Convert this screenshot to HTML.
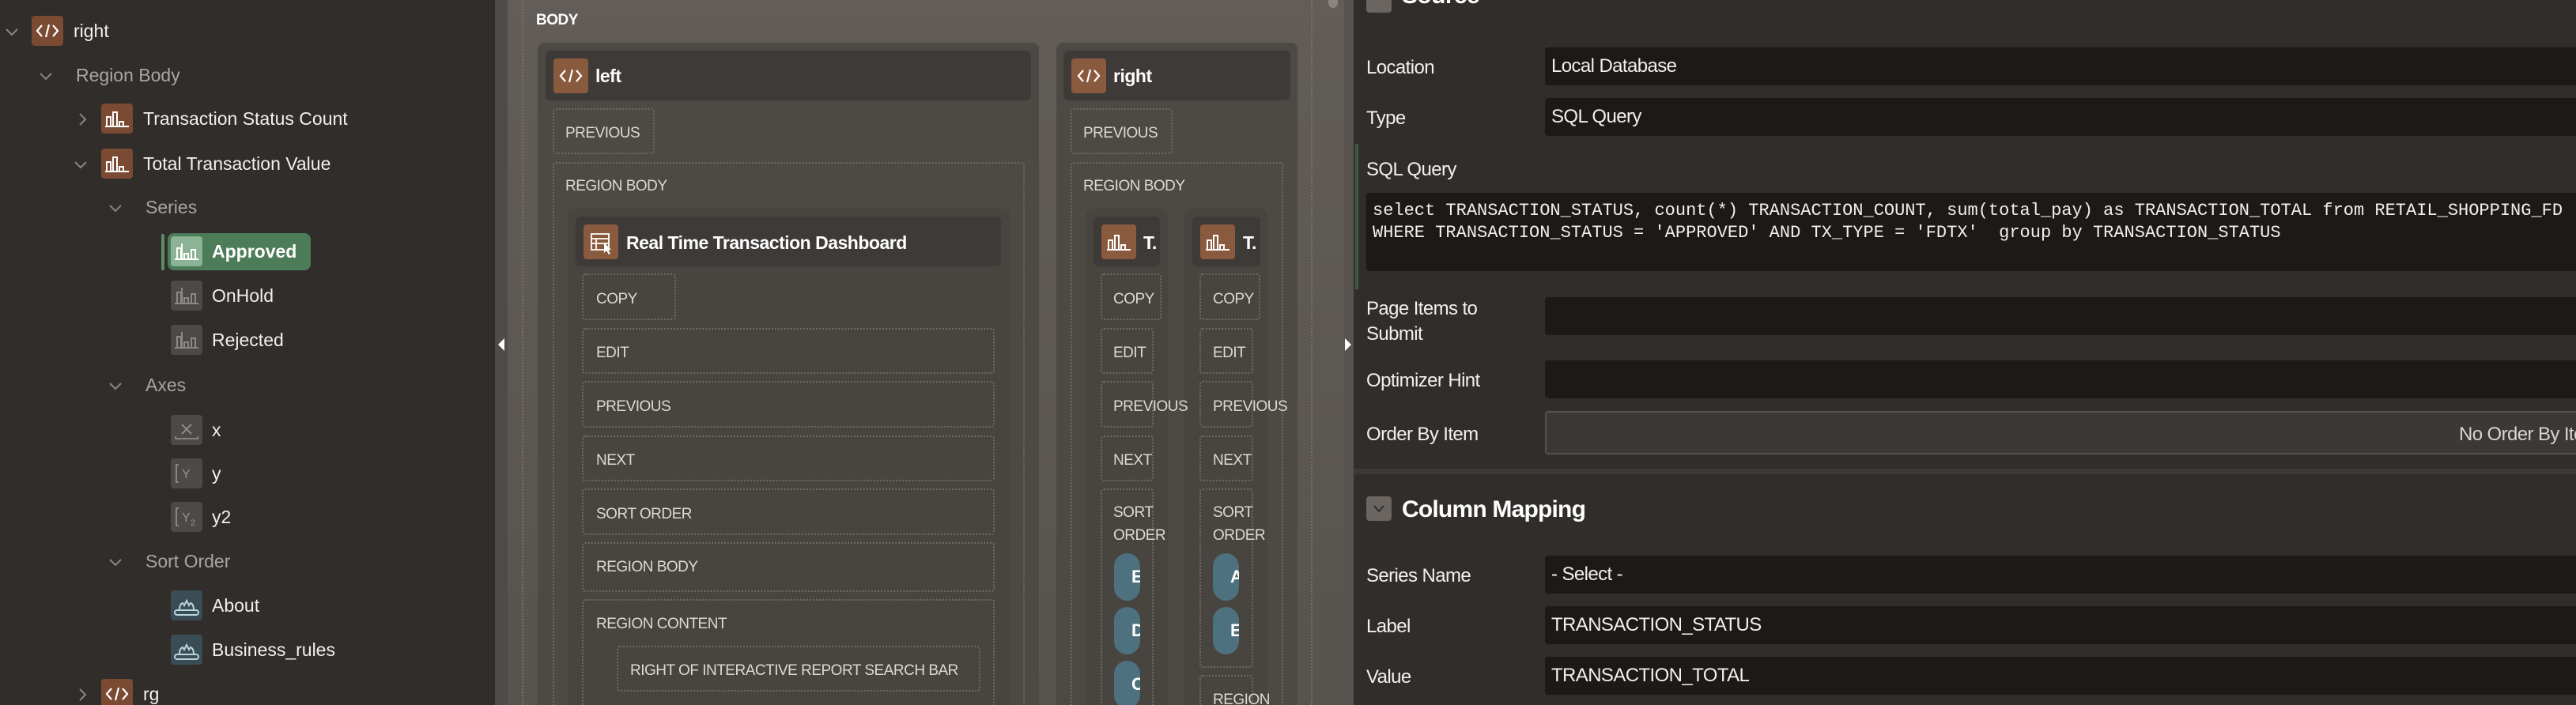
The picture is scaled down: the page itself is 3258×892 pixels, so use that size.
<!DOCTYPE html>
<html style="overflow:hidden;width:3258px;height:892px"><head><meta charset="utf-8"><style>
*{margin:0;padding:0;box-sizing:border-box}
body{width:3258px;height:892px;overflow:hidden;background:#312d2a;font-family:"Liberation Sans",sans-serif;position:relative}
.a{position:absolute}
.t{position:absolute;color:#f2efec;font-size:23px;white-space:nowrap;line-height:1}
.g{color:#a9a5a1}
.ic{position:absolute;width:40px;height:38px;border-radius:4px;display:flex;align-items:center;justify-content:center}
.br{background:#7a4a33}.gr{background:#4d4946}.tl{background:#3a4d55}
.chev{position:absolute;width:18px;height:18px}
.d{position:absolute;border:2px dotted #6e6965;border-radius:4px}
.m{position:absolute;color:#ddd9d5;font-size:19px;white-space:nowrap;line-height:1;letter-spacing:-0.5px}
.hd{position:absolute;background:#3e3a37;border-radius:6px}
.hi{position:absolute;background:#8a5a3e;border-radius:4px;display:flex;align-items:center;justify-content:center}
.ht{position:absolute;color:#fff;font-weight:bold;font-size:23px;white-space:nowrap;line-height:1;letter-spacing:-0.5px}
.pill{position:absolute;width:33px;height:60px;border-radius:17px;background:#4d717e;overflow:hidden;color:#fff;font-weight:bold;font-size:22px;line-height:60px;text-align:left;padding-left:22px}
.lb{position:absolute;left:1728px;color:#f2efec;font-size:24px;line-height:1;letter-spacing:-0.6px;white-space:nowrap}
.in{position:absolute;left:1954px;right:0;height:48px;background:#1b1a19;border-radius:4px 0 0 4px;color:#f2efec;font-size:24px;letter-spacing:-0.6px;padding-left:8px;line-height:48px;white-space:nowrap}
.clip{position:absolute;top:0;height:892px;overflow:hidden}
</style></head><body>
<svg width="0" height="0" style="position:absolute"><defs>
<symbol id="code" viewBox="0 0 40 38"><path d="M13 12 L7 19 L13 26 M27 12 L33 19 L27 26 M22 11 L18 27" stroke="#fff" stroke-width="2.2" fill="none"/></symbol>
<symbol id="bar" viewBox="0 0 40 38"><path d="M5 29 H35 M7 29 V17 H12 V29 M15 29 V11 H20 V29 M23 29 V23 H28 V29" stroke="#fff" stroke-width="2" fill="none"/></symbol>
<symbol id="bar2" viewBox="0 0 40 38"><path d="M5 29 H35 M8 29 V15 H13 V29 M17 29 V22 H22 V29 M26 29 V17 H31 V29 M14 29 V9" stroke="currentColor" stroke-width="2" fill="none"/></symbol>
<symbol id="dn" viewBox="0 0 18 18"><path d="M2 6 L9 13 L16 6" stroke="#8a8581" stroke-width="2" fill="none"/></symbol>
<symbol id="rt" viewBox="0 0 18 18"><path d="M6 2 L13 9 L6 16" stroke="#8a8581" stroke-width="2" fill="none"/></symbol>
<symbol id="hat" viewBox="0 0 40 38"><path d="M8 25 H32 A3 3 0 0 1 32 31 H8 A3 3 0 0 1 8 25 Z M11 25 C11 20 12 17 15 16 L17 19 L20 13 L23 19 L25 16 C28 17 29 20 29 25" stroke="#b8d4dc" stroke-width="2" fill="none"/></symbol>
</defs></svg>

<!-- TREE -->
<div class="clip" style="left:0;width:626px">
<svg class="chev" style="left:6px;top:31px"><use href="#dn"/></svg>
<div class="ic br" style="left:40px;top:20px"><svg width="40" height="38"><use href="#code"/></svg></div>
<div class="t" style="left:93px;top:28px">right</div>
<svg class="chev" style="left:49px;top:87px"><use href="#dn"/></svg>
<div class="t g" style="left:96px;top:84px">Region Body</div>
<svg class="chev" style="left:95px;top:142px"><use href="#rt"/></svg>
<div class="ic br" style="left:128px;top:131px"><svg width="40" height="38"><use href="#bar"/></svg></div>
<div class="t" style="left:181px;top:139px">Transaction Status Count</div>
<svg class="chev" style="left:93px;top:199px"><use href="#dn"/></svg>
<div class="ic br" style="left:128px;top:188px"><svg width="40" height="38"><use href="#bar"/></svg></div>
<div class="t" style="left:181px;top:196px">Total Transaction Value</div>
<svg class="chev" style="left:137px;top:254px"><use href="#dn"/></svg>
<div class="t g" style="left:184px;top:251px">Series</div>
<div class="a" style="left:204px;top:296px;width:4px;height:46px;background:#5e8c66;border-radius:2px"></div>
<div class="a" style="left:212px;top:295px;width:181px;height:47px;background:#4c7c58;border-radius:8px"></div>
<div class="ic" style="left:216px;top:299px;background:#8cb394;color:#fff"><svg width="40" height="38"><use href="#bar2"/></svg></div>
<div class="t" style="left:268px;top:307px;font-weight:bold;color:#fff">Approved</div>
<div class="ic gr" style="left:216px;top:355px;color:#8d8884"><svg width="40" height="38"><use href="#bar2"/></svg></div>
<div class="t" style="left:268px;top:363px">OnHold</div>
<div class="ic gr" style="left:216px;top:411px;color:#8d8884"><svg width="40" height="38"><use href="#bar2"/></svg></div>
<div class="t" style="left:268px;top:419px">Rejected</div>
<svg class="chev" style="left:137px;top:479px"><use href="#dn"/></svg>
<div class="t g" style="left:184px;top:476px">Axes</div>
<div class="ic gr" style="left:216px;top:525px"><svg width="40" height="38"><path d="M14 12 L26 24 M26 12 L14 24 M6 27 V30 H34 V27" stroke="#9a9591" stroke-width="1.6" fill="none"/></svg></div>
<div class="t" style="left:268px;top:533px">x</div>
<div class="ic gr" style="left:216px;top:580px"><svg width="40" height="38"><path d="M10 8 H7 V30 H10" stroke="#9a9591" stroke-width="1.6" fill="none"/><text x="14" y="25" fill="#9a9591" font-size="16" font-family="Liberation Sans">Y</text></svg></div>
<div class="t" style="left:268px;top:588px">y</div>
<div class="ic gr" style="left:216px;top:635px"><svg width="40" height="38"><path d="M10 8 H7 V30 H10" stroke="#9a9591" stroke-width="1.6" fill="none"/><text x="14" y="25" fill="#9a9591" font-size="16" font-family="Liberation Sans">Y</text><text x="25" y="30" fill="#9a9591" font-size="11" font-family="Liberation Sans">2</text></svg></div>
<div class="t" style="left:268px;top:643px">y2</div>
<svg class="chev" style="left:137px;top:702px"><use href="#dn"/></svg>
<div class="t g" style="left:184px;top:699px">Sort Order</div>
<div class="ic tl" style="left:216px;top:747px"><svg width="40" height="38"><use href="#hat"/></svg></div>
<div class="t" style="left:268px;top:755px">About</div>
<div class="ic tl" style="left:216px;top:803px"><svg width="40" height="38"><use href="#hat"/></svg></div>
<div class="t" style="left:268px;top:811px">Business_rules</div>
<svg class="chev" style="left:95px;top:870px"><use href="#rt"/></svg>
<div class="ic br" style="left:128px;top:859px;height:33px;border-radius:4px 4px 0 0;align-items:flex-start"><svg width="40" height="38"><use href="#code"/></svg></div>
<div class="t" style="left:181px;top:867px;height:25px;overflow:hidden">rg</div>
</div>

<!-- splitter left -->
<div class="a" style="left:626px;top:0;width:16px;height:892px;background:#4f4b48"></div>
<div class="a" style="left:630px;top:428px;width:0;height:0;border-top:8px solid transparent;border-bottom:8px solid transparent;border-right:8px solid #fff"></div>

<!-- MIDDLE -->
<div class="a" style="left:642px;top:0;width:1058px;height:892px;background:linear-gradient(#625d59,#57534f);overflow:hidden">
<div class="a" style="left:18px;top:0;width:1000px;height:892px;border-left:2px dotted #76716d;border-right:2px dotted #76716d"></div>
<div class="a" style="left:1038px;top:0;width:12px;height:10px;background:#8a8581;border-radius:0 0 6px 6px"></div>
<div class="m" style="left:36px;top:16px;color:#fff;font-weight:bold;font-size:19px">BODY</div>
<div style="position:absolute;left:-642px;top:0;width:1700px;height:892px">

<div class="a" style="left:680px;top:54px;width:634px;height:850px;background:#4d4945;border-radius:8px"></div>
<div class="hd" style="left:690px;top:64px;width:614px;height:63px"></div>
<div class="hi" style="left:700px;top:74px;width:44px;height:44px"><svg width="40" height="38"><use href="#code"/></svg></div>
<div class="ht" style="left:753px;top:85px">left</div>
<div class="d" style="left:699px;top:137px;width:129px;height:58px"></div>
<div class="m" style="left:715px;top:159px">PREVIOUS</div>
<div class="d" style="left:699px;top:205px;width:597px;height:700px"></div>
<div class="m" style="left:715px;top:226px">REGION BODY</div>
<div class="a" style="left:718px;top:264px;width:559px;height:640px;background:#48443f;border-radius:8px"></div>
<div class="hd" style="left:728px;top:274px;width:538px;height:63px"></div>
<div class="hi" style="left:738px;top:284px;width:44px;height:44px"><svg width="40" height="38"><path d="M8 9 H30 V29 H8 Z M8 15 H30 M8 21 H30 M14 15 V29" stroke="#fff" stroke-width="1.8" fill="none"/><path d="M24 20 L24 33 L27 30 L30 35 L32 34 L29 29 L33 29 Z" fill="#fff"/></svg></div>
<div class="ht" style="left:792px;top:296px">Real Time Transaction Dashboard</div>
<div class="d" style="left:736px;top:346px;width:119px;height:59px"></div>
<div class="m" style="left:754px;top:369px">COPY</div>
<div class="d" style="left:736px;top:415px;width:522px;height:58px"></div>
<div class="m" style="left:754px;top:437px">EDIT</div>
<div class="d" style="left:736px;top:482px;width:522px;height:59px"></div>
<div class="m" style="left:754px;top:505px">PREVIOUS</div>
<div class="d" style="left:736px;top:551px;width:522px;height:58px"></div>
<div class="m" style="left:754px;top:573px">NEXT</div>
<div class="d" style="left:736px;top:618px;width:522px;height:59px"></div>
<div class="m" style="left:754px;top:641px">SORT ORDER</div>
<div class="d" style="left:736px;top:686px;width:522px;height:63px"></div>
<div class="m" style="left:754px;top:708px">REGION BODY</div>
<div class="d" style="left:736px;top:758px;width:522px;height:200px"></div>
<div class="m" style="left:754px;top:780px">REGION CONTENT</div>
<div class="d" style="left:780px;top:817px;width:460px;height:58px"></div>
<div class="m" style="left:797px;top:839px">RIGHT OF INTERACTIVE REPORT SEARCH BAR</div>

<div class="a" style="left:1336px;top:54px;width:305px;height:850px;background:#4d4945;border-radius:8px"></div>
<div class="hd" style="left:1345px;top:64px;width:287px;height:63px"></div>
<div class="hi" style="left:1355px;top:74px;width:44px;height:44px"><svg width="40" height="38"><use href="#code"/></svg></div>
<div class="ht" style="left:1408px;top:85px">right</div>
<div class="d" style="left:1354px;top:137px;width:129px;height:58px"></div>
<div class="m" style="left:1370px;top:159px">PREVIOUS</div>
<div class="d" style="left:1354px;top:205px;width:269px;height:700px"></div>
<div class="m" style="left:1370px;top:226px">REGION BODY</div>

<div class="a" style="left:1373px;top:264px;width:104px;height:640px;background:#48443f;border-radius:8px"></div>
<div class="hd" style="left:1383px;top:274px;width:84px;height:63px"></div>
<div class="hi" style="left:1393px;top:284px;width:44px;height:44px"><svg width="40" height="38"><use href="#bar"/></svg></div>
<div class="ht" style="left:1446px;top:296px">T.</div>
<div class="a" style="left:1498px;top:264px;width:105px;height:640px;background:#48443f;border-radius:8px"></div>
<div class="hd" style="left:1508px;top:274px;width:86px;height:63px"></div>
<div class="hi" style="left:1518px;top:284px;width:44px;height:44px"><svg width="40" height="38"><use href="#bar"/></svg></div>
<div class="ht" style="left:1572px;top:296px">T.</div>

<div class="d" style="left:1392px;top:346px;width:77px;height:59px"></div>
<div class="m" style="left:1408px;top:369px">COPY</div>
<div class="d" style="left:1392px;top:415px;width:67px;height:58px"></div>
<div class="m" style="left:1408px;top:437px">EDIT</div>
<div class="d" style="left:1392px;top:482px;width:67px;height:59px"></div>
<div class="m" style="left:1408px;top:505px">PREVIOUS</div>
<div class="d" style="left:1392px;top:551px;width:67px;height:58px"></div>
<div class="m" style="left:1408px;top:573px">NEXT</div>
<div class="d" style="left:1392px;top:618px;width:67px;height:300px"></div>
<div class="m" style="left:1408px;top:634px;line-height:29px">SORT<br>ORDER</div>
<div class="pill" style="left:1409px;top:700px">E</div>
<div class="pill" style="left:1409px;top:768px">D</div>
<div class="pill" style="left:1409px;top:836px">C</div>

<div class="d" style="left:1517px;top:346px;width:77px;height:59px"></div>
<div class="m" style="left:1534px;top:369px">COPY</div>
<div class="d" style="left:1517px;top:415px;width:68px;height:58px"></div>
<div class="m" style="left:1534px;top:437px">EDIT</div>
<div class="d" style="left:1517px;top:482px;width:68px;height:59px"></div>
<div class="m" style="left:1534px;top:505px">PREVIOUS</div>
<div class="d" style="left:1517px;top:551px;width:68px;height:58px"></div>
<div class="m" style="left:1534px;top:573px">NEXT</div>
<div class="d" style="left:1517px;top:618px;width:68px;height:227px"></div>
<div class="m" style="left:1534px;top:634px;line-height:29px">SORT<br>ORDER</div>
<div class="pill" style="left:1534px;top:700px">A</div>
<div class="pill" style="left:1534px;top:768px">E</div>
<div class="d" style="left:1517px;top:854px;width:68px;height:60px"></div>
<div class="m" style="left:1534px;top:876px">REGION</div>
</div>
</div>

<!-- splitter right -->
<div class="a" style="left:1700px;top:0;width:12px;height:892px;background:#57534f"></div>
<div class="a" style="left:1701px;top:428px;width:0;height:0;border-top:8px solid transparent;border-bottom:8px solid transparent;border-left:8px solid #fff"></div>

<!-- RIGHT -->
<div class="a" style="left:1712px;top:0;width:1546px;height:892px;overflow:hidden">
<div style="position:absolute;left:-1712px;top:0;width:3258px;height:892px">
<div class="a" style="left:1728px;top:-16px;width:32px;height:32px;background:#6a6561;border-radius:4px"></div>
<div class="a" style="left:1773px;top:-20px;color:#fff;font-weight:bold;font-size:30px;line-height:1;letter-spacing:-0.6px">Source</div>

<div class="lb" style="top:74px">Location</div>
<div class="in" style="top:60px">Local Database</div>
<div class="lb" style="top:138px">Type</div>
<div class="in" style="top:124px">SQL Query</div>
<div class="a" style="left:1714px;top:182px;width:4px;height:184px;background:#3f5a44"></div>
<div class="lb" style="top:203px">SQL Query</div>
<div class="a" style="left:1728px;top:244px;right:0;height:99px;background:#1b1a19;border-radius:4px 0 0 4px;color:#f2efec;font-family:'Liberation Mono',monospace;font-size:22px;line-height:28px;padding:9px 0 0 8px;white-space:pre;overflow:hidden">select TRANSACTION_STATUS, count(*) TRANSACTION_COUNT, sum(total_pay) as TRANSACTION_TOTAL from RETAIL_SHOPPING_FD
WHERE TRANSACTION_STATUS = 'APPROVED' AND TX_TYPE = 'FDTX'  group by TRANSACTION_STATUS</div>
<div class="lb" style="top:375px;line-height:32px">Page Items to<br>Submit</div>
<div class="in" style="top:376px"></div>
<div class="lb" style="top:470px">Optimizer Hint</div>
<div class="in" style="top:456px"></div>
<div class="lb" style="top:538px">Order By Item</div>
<div class="a" style="left:1954px;top:520px;right:0;height:55px;background:#3b3835;border:2px solid #56524e;border-right:none;border-radius:4px 0 0 4px"></div>
<div class="lb" style="left:3110px;top:538px;color:#d8d4d0">No Order By Item</div>
<div class="a" style="left:1712px;top:593px;right:0;height:7px;background:#3c3835"></div>

<div class="a" style="left:1728px;top:628px;width:32px;height:31px;background:#6a6561;border-radius:4px"><svg width="32" height="31"><path d="M10 12 L16 19 L22 12" stroke="#2a2725" stroke-width="1.8" fill="none"/></svg></div>
<div class="a" style="left:1773px;top:630px;color:#fff;font-weight:bold;font-size:30px;line-height:1;letter-spacing:-0.8px">Column Mapping</div>
<div class="lb" style="top:717px">Series Name</div>
<div class="in" style="top:703px">- Select -</div>
<div class="lb" style="top:781px">Label</div>
<div class="in" style="top:767px">TRANSACTION_STATUS</div>
<div class="lb" style="top:845px">Value</div>
<div class="in" style="top:831px">TRANSACTION_TOTAL</div>
</div>
</div>
</body></html>
